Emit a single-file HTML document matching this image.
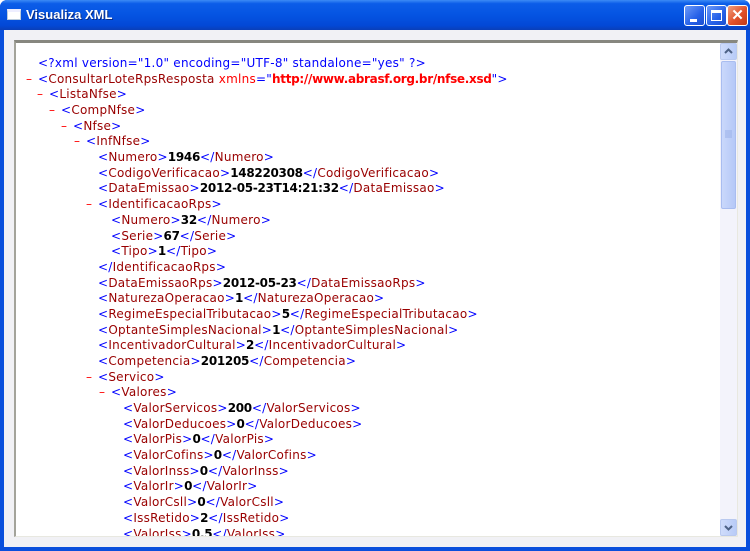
<!DOCTYPE html>
<html><head><style>
*{margin:0;padding:0;box-sizing:border-box}
body{width:750px;height:551px;overflow:hidden;background:#fff;font-family:"DejaVu Sans","Liberation Sans",sans-serif}
.win{position:absolute;left:0;top:0;width:750px;height:551px;background:#0a4fdc;border-radius:7px 7px 0 0}
.title{position:absolute;left:0;top:0;width:750px;height:30px;border-radius:7px 7px 0 0;background:linear-gradient(#3d8bf5 0%,#0c5de8 12%,#0554e2 50%,#0348d6 85%,#0a3fb8 100%)}
.title span{position:absolute;left:26px;top:7px;color:#fff;font:bold 13px "Liberation Sans",sans-serif;text-shadow:1px 1px #0a2a80}
.ticon{position:absolute;left:7px;top:9px;width:14px;height:11px;background:#fff;border:1px solid #bcd;border-top:3px solid #eef}
.btn{position:absolute;top:5px;width:21px;height:21px;border:1px solid #fff;border-radius:3px;background:linear-gradient(135deg,#6d9bf8,#2560e8 60%,#1c4fcf)}
.client{position:absolute;left:4px;top:30px;width:742px;height:517px;background:#f1f1f5}
.panel{position:absolute;left:14px;top:40px;width:724px;height:497px;background:#fff;border-top:3px solid #87877f;border-left:2px solid #a3a39a;border-right:1px solid #e8e8e0;border-bottom:1px solid #e8e8e0;overflow:hidden}
.clip{position:absolute;left:16px;top:43px;width:704px;height:493px;overflow:hidden}
.sb{position:absolute;left:720px;top:43px;width:17px;height:493px;background:#f3f3fb}
.sbtn{position:absolute;left:0;width:17px;height:17px;border:1px solid #b9c9ef;border-radius:2px;background:linear-gradient(90deg,#cfdcfb,#b8cbf7)}
.thumb{position:absolute;left:1px;top:18px;width:15px;height:148px;border:1px solid #a9bdf0;border-radius:2px;background:linear-gradient(90deg,#cad8fb,#b5c8f7)}
.l{position:absolute;font-size:12px;letter-spacing:0.25px;line-height:15px;white-space:nowrap;color:#0000ff}
.d{position:absolute;left:-12px;color:#ff0000}
.t{color:#990000}
.b{color:#000;font-weight:bold;letter-spacing:-0.3px}
.r{color:#ff0000}
b.r{letter-spacing:-0.3px}
</style></head><body>
<div class="win">
<div class="title"><div class="ticon"></div><span>Visualiza XML</span>
<div class="btn" style="left:684px"><div style="position:absolute;left:5px;top:13px;width:7px;height:3px;background:#fff"></div></div>
<div class="btn" style="left:706px"><div style="position:absolute;left:4px;top:4px;width:11px;height:11px;border:1px solid #fff;border-top:3px solid #fff"></div></div>
<div class="btn" style="left:727px;background:linear-gradient(135deg,#f0a080,#e0502a 55%,#c03a18);color:#fff;font:bold 15px 'Liberation Sans';text-align:center;line-height:19px">✕</div>
</div>
<div class="client"></div>
<div class="panel"></div>
<div class="sb"><div class="sbtn" style="top:0"><svg width="15" height="15"><path d="M4 9 L7.5 5.5 L11 9" stroke="#4d6185" stroke-width="2" fill="none"/></svg></div><div class="thumb"><svg width="13" height="146"><path d="M3 69h7M3 71h7M3 73h7M3 75h7" stroke="#9ab0e8"/></svg></div><div class="sbtn" style="top:476px"><svg width="15" height="15"><path d="M4 6 L7.5 9.5 L11 6" stroke="#4d6185" stroke-width="2" fill="none"/></svg></div></div>
<div class="clip"><div style="position:absolute;left:-16px;top:-43px">
<div class="l" style="left:38px;top:56px">&lt;?xml version="1.0" encoding="UTF-8" standalone="yes" ?&gt;</div>
<div class="l" style="left:38px;top:72px"><span class="d">–</span>&lt;<span class="t">ConsultarLoteRpsResposta</span> <span class="r">xmlns</span>="<b class="r">http://www.abrasf.org.br/nfse.xsd</b>"&gt;</div>
<div class="l" style="left:49px;top:87px"><span class="d">–</span>&lt;<span class="t">ListaNfse</span>&gt;</div>
<div class="l" style="left:61px;top:103px"><span class="d">–</span>&lt;<span class="t">CompNfse</span>&gt;</div>
<div class="l" style="left:73px;top:119px"><span class="d">–</span>&lt;<span class="t">Nfse</span>&gt;</div>
<div class="l" style="left:86px;top:134px"><span class="d">–</span>&lt;<span class="t">InfNfse</span>&gt;</div>
<div class="l" style="left:98px;top:150px">&lt;<span class="t">Numero</span>&gt;<span class="b">1946</span>&lt;/<span class="t">Numero</span>&gt;</div>
<div class="l" style="left:98px;top:166px">&lt;<span class="t">CodigoVerificacao</span>&gt;<span class="b">148220308</span>&lt;/<span class="t">CodigoVerificacao</span>&gt;</div>
<div class="l" style="left:98px;top:181px">&lt;<span class="t">DataEmissao</span>&gt;<span class="b">2012-05-23T14:21:32</span>&lt;/<span class="t">DataEmissao</span>&gt;</div>
<div class="l" style="left:98px;top:197px"><span class="d">–</span>&lt;<span class="t">IdentificacaoRps</span>&gt;</div>
<div class="l" style="left:111px;top:213px">&lt;<span class="t">Numero</span>&gt;<span class="b">32</span>&lt;/<span class="t">Numero</span>&gt;</div>
<div class="l" style="left:111px;top:229px">&lt;<span class="t">Serie</span>&gt;<span class="b">67</span>&lt;/<span class="t">Serie</span>&gt;</div>
<div class="l" style="left:111px;top:244px">&lt;<span class="t">Tipo</span>&gt;<span class="b">1</span>&lt;/<span class="t">Tipo</span>&gt;</div>
<div class="l" style="left:98px;top:260px">&lt;/<span class="t">IdentificacaoRps</span>&gt;</div>
<div class="l" style="left:98px;top:276px">&lt;<span class="t">DataEmissaoRps</span>&gt;<span class="b">2012-05-23</span>&lt;/<span class="t">DataEmissaoRps</span>&gt;</div>
<div class="l" style="left:98px;top:291px">&lt;<span class="t">NaturezaOperacao</span>&gt;<span class="b">1</span>&lt;/<span class="t">NaturezaOperacao</span>&gt;</div>
<div class="l" style="left:98px;top:307px">&lt;<span class="t">RegimeEspecialTributacao</span>&gt;<span class="b">5</span>&lt;/<span class="t">RegimeEspecialTributacao</span>&gt;</div>
<div class="l" style="left:98px;top:323px">&lt;<span class="t">OptanteSimplesNacional</span>&gt;<span class="b">1</span>&lt;/<span class="t">OptanteSimplesNacional</span>&gt;</div>
<div class="l" style="left:98px;top:338px">&lt;<span class="t">IncentivadorCultural</span>&gt;<span class="b">2</span>&lt;/<span class="t">IncentivadorCultural</span>&gt;</div>
<div class="l" style="left:98px;top:354px">&lt;<span class="t">Competencia</span>&gt;<span class="b">201205</span>&lt;/<span class="t">Competencia</span>&gt;</div>
<div class="l" style="left:98px;top:370px"><span class="d">–</span>&lt;<span class="t">Servico</span>&gt;</div>
<div class="l" style="left:111px;top:385px"><span class="d">–</span>&lt;<span class="t">Valores</span>&gt;</div>
<div class="l" style="left:123px;top:401px">&lt;<span class="t">ValorServicos</span>&gt;<span class="b">200</span>&lt;/<span class="t">ValorServicos</span>&gt;</div>
<div class="l" style="left:123px;top:417px">&lt;<span class="t">ValorDeducoes</span>&gt;<span class="b">0</span>&lt;/<span class="t">ValorDeducoes</span>&gt;</div>
<div class="l" style="left:123px;top:432px">&lt;<span class="t">ValorPis</span>&gt;<span class="b">0</span>&lt;/<span class="t">ValorPis</span>&gt;</div>
<div class="l" style="left:123px;top:448px">&lt;<span class="t">ValorCofins</span>&gt;<span class="b">0</span>&lt;/<span class="t">ValorCofins</span>&gt;</div>
<div class="l" style="left:123px;top:464px">&lt;<span class="t">ValorInss</span>&gt;<span class="b">0</span>&lt;/<span class="t">ValorInss</span>&gt;</div>
<div class="l" style="left:123px;top:479px">&lt;<span class="t">ValorIr</span>&gt;<span class="b">0</span>&lt;/<span class="t">ValorIr</span>&gt;</div>
<div class="l" style="left:123px;top:495px">&lt;<span class="t">ValorCsll</span>&gt;<span class="b">0</span>&lt;/<span class="t">ValorCsll</span>&gt;</div>
<div class="l" style="left:123px;top:511px">&lt;<span class="t">IssRetido</span>&gt;<span class="b">2</span>&lt;/<span class="t">IssRetido</span>&gt;</div>
<div class="l" style="left:123px;top:527px">&lt;<span class="t">ValorIss</span>&gt;<span class="b">0.5</span>&lt;/<span class="t">ValorIss</span>&gt;</div>
</div></div>
</div>
</body></html>
